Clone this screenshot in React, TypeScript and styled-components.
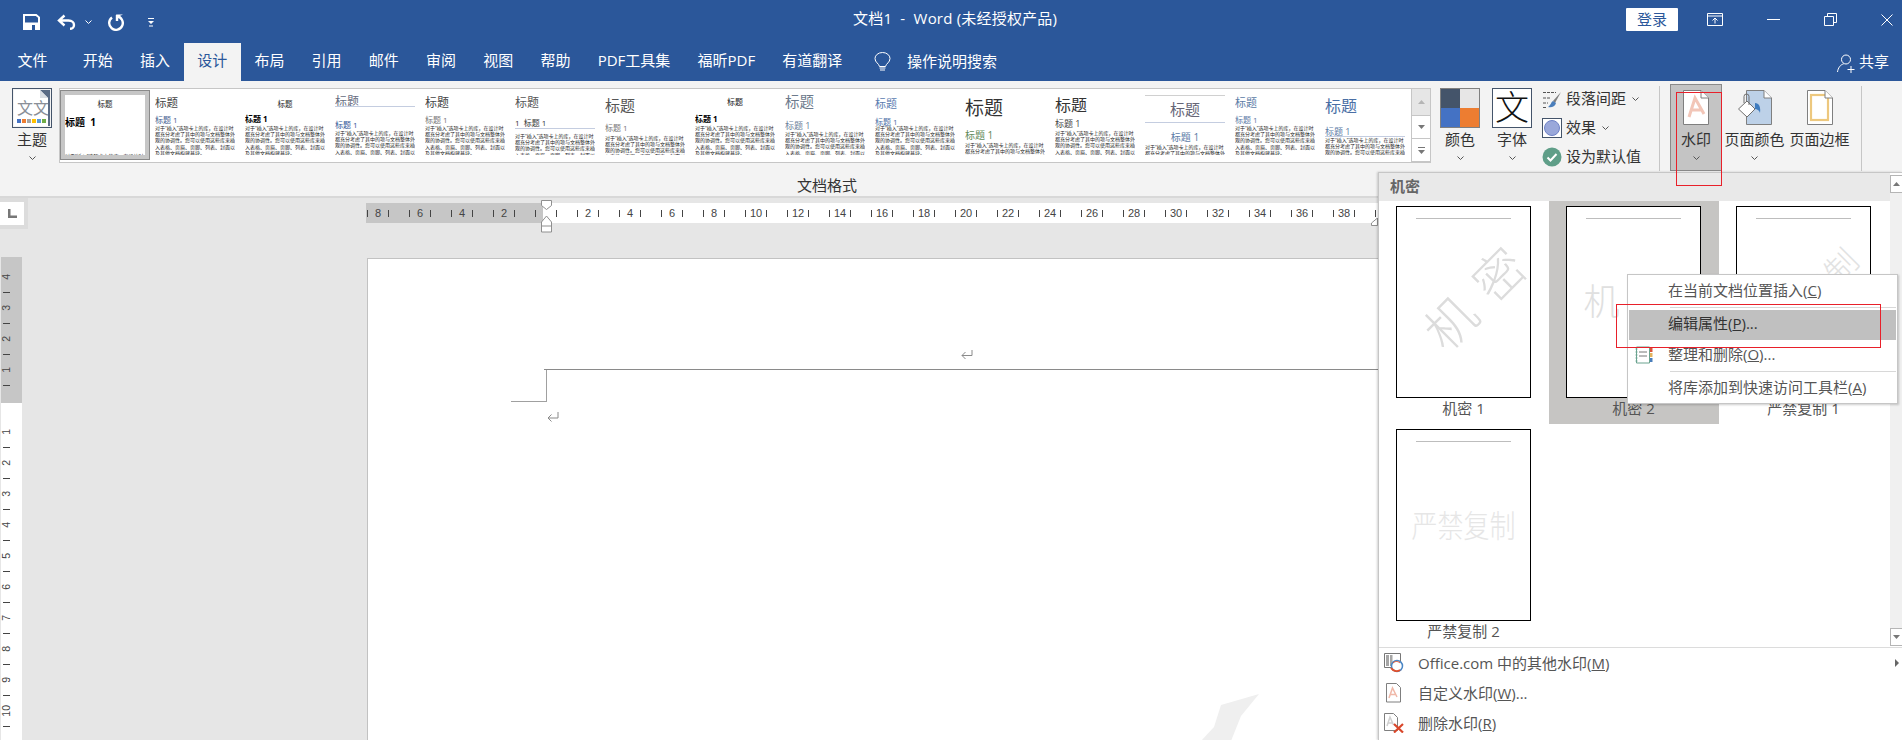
import React from 'react';
import styled, { createGlobalStyle } from 'styled-components';

const FONT = `"Open Sans", "Noto Sans CJK SC", sans-serif`;

const GlobalStyle = createGlobalStyle`
  html, body {
    margin: 0;
    padding: 0;
    overflow: hidden;
    font-family: ${FONT};
  }
  * { box-sizing: border-box; }
`;

const Shell = styled.div`
  position: relative;
  width: 1902px;
  height: 740px;
  overflow: hidden;
  display: flex;
  flex-direction: column;
  background: #e6e6e6;
`;

/* title bar */
const TitleBar = styled.div`
  height: 43px;
  display: flex;
  align-items: center;
  background: #2b579a;
  color: #fff;
  font-size: 15px;
`;
const QuickAccess = styled.div`
  width: 853px;
  padding-left: 23px;
  padding-top: 1px;
  display: flex;
  align-items: center;
`;
const QuickIcon = styled.svg<{ $ml?: number }>`
  display: block;
  margin-left: ${(p) => p.$ml ?? 0}px;
`;
const DocTitle = styled.div`
  white-space: pre;
  line-height: 20px;
  letter-spacing: 0.2px;
  margin-top: -8px;
`;
const WindowControls = styled.div`
  margin-left: auto;
  padding-right: 9px;
  display: flex;
  align-items: center;
  gap: 44px;
  margin-top: -4px;
`;
const LoginButton = styled.button`
  width: 52px;
  height: 23px;
  margin-right: -15px;
  padding: 0 0 2px;
  border: 0;
  border-radius: 1px;
  background: #fff;
  color: #2b579a;
  font: 15px/20px ${FONT};
`;

/* tabs */
const TabBar = styled.div`
  height: 38px;
  padding-left: 4px;
  display: flex;
  align-items: stretch;
  background: #2b579a;
  color: #fff;
  font-size: 15px;
`;
const Tab = styled.div<{ $active?: boolean; $gapRight?: number }>`
  padding: 0 13.6px;
  line-height: 34px;
  white-space: nowrap;
  margin-right: ${(p) => p.$gapRight ?? 0}px;
  background: ${(p) => (p.$active ? '#f3f3f3' : 'transparent')};
  color: ${(p) => (p.$active ? '#2b579a' : '#fff')};
`;
const SearchHint = styled.div`
  margin-left: 18px;
  display: flex;
  align-items: center;
  gap: 16px;
  height: 38px;
`;
const ShareBox = styled.div`
  margin-left: auto;
  padding-right: 13px;
  height: 40px;
  display: flex;
  align-items: center;
  gap: 4px;
`;
const RaisedText = styled.span<{ $lift: number }>`
  margin-top: -${(p) => p.$lift}px;
  white-space: nowrap;
`;

/* ribbon */
const Ribbon = styled.div`
  height: 117px;
  padding-top: 3px;
  display: flex;
  background: #f3f3f3;
  border-bottom: 2px solid #d8d8d8;
  color: #333;
  font-size: 15px;
`;
const FormatGroup = styled.div`
  width: 1659px;
  padding-left: 6px;
  display: flex;
  flex-direction: column;
`;
const FormatRow = styled.div`
  height: 92px;
  display: flex;
  align-items: flex-start;
`;
const GroupCaption = styled.div`
  height: 20px;
  line-height: 18px;
  text-align: center;
  padding-right: 11px;
`;
const RibbonSeparator = styled.div`
  width: 1px;
  height: 85px;
  margin-top: 2px;
  background: #c6c6c6;
`;
const PageGroup = styled.div`
  display: flex;
  padding-left: 10px;
  width: 201px;
`;
const RibbonButton = styled.div<{ $width: number; $active?: boolean }>`
  width: ${(p) => p.$width}px;
  height: 87px;
  display: flex;
  flex-direction: column;
  align-items: center;
  background: ${(p) => (p.$active ? '#c4c4c4' : 'transparent')};
  box-shadow: ${(p) => (p.$active ? 'inset 0 0 0 1px #8a8a8a' : 'none')};
`;
const ButtonArt = styled.div`
  height: 47px;
  display: flex;
  align-items: center;
  justify-content: center;
`;
const ButtonLabel = styled.div`
  height: 19px;
  line-height: 17px;
  white-space: nowrap;
`;
const ButtonChevron = styled.svg`
  display: block;
  margin-top: 6px;
`;
const ThemeTile = styled.div`
  width: 40px;
  height: 40px;
  border: 1px solid #44546a;
  padding: 1px;
  background: #f3f3f3;
`;
const SwatchGrid = styled.div`
  width: 40px;
  height: 40px;
  display: grid;
  grid-template-columns: 1fr 1fr;
  border: 1px solid #808080;
`;
const Swatch = styled.div<{ $color: string }>`
  background: ${(p) => p.$color};
`;
const FontTile = styled.div`
  width: 40px;
  height: 40px;
  border: 1px solid #44546a;
  background: #fff;
  color: #111;
  font-size: 34px;
  font-weight: 300;
  line-height: 36px;
  text-align: center;
`;

/* style gallery */
const Gallery = styled.div`
  width: 1372px;
  height: 75px;
  margin: 4px 3px 0 1px;
  display: flex;
  border: 1px solid #c6c6c6;
  background: #fff;
`;
const TileRow = styled.div`
  width: 1351px;
  display: flex;
  padding: 1px 0 0 0;
`;
const Tile = styled.div<{ $selected?: boolean }>`
  width: 90px;
  height: 70px;
  padding: 5px;
  flex: none;
  background: ${(p) => (p.$selected ? '#c6c6c6' : '#fff')};
  box-shadow: ${(p) => (p.$selected ? 'inset 0 0 0 1px #8a8a8a' : 'none')};
`;
const TileSheet = styled.div`
  position: relative;
  width: 80px;
  height: 60px;
  overflow: hidden;
  background: #fff;
`;
const TileTitle = styled.div<{ $mt: number; $size: number; $color: string; $center?: boolean; $bold?: boolean; $rule?: number }>`
  position: relative;
  margin-top: ${(p) => p.$mt}px;
  height: ${(p) => p.$size}px;
  font-size: ${(p) => p.$size}px;
  line-height: ${(p) => p.$size}px;
  font-weight: ${(p) => (p.$bold ? 700 : 400)};
  color: ${(p) => p.$color};
  text-align: ${(p) => (p.$center ? 'center' : 'left')};
  white-space: pre;
  &::after {
    content: '';
    display: ${(p) => (p.$rule ? 'block' : 'none')};
    position: absolute;
    left: 0;
    right: 0;
    top: ${(p) => p.$rule ?? 0}px;
    height: 1px;
    background: #c4cde0;
  }
`;
const TileBody = styled.div<{ $mt: number }>`
  margin-top: ${(p) => p.$mt}px;
  font-size: 5px;
  line-height: 6.2px;
  color: #222;
`;
const SheetTopRule = styled.div`
  position: absolute;
  left: 0;
  right: 0;
  top: 0;
  height: 1px;
  background: #d0d0d0;
`;
const GalleryScroll = styled.div`
  width: 19px;
  display: flex;
  flex-direction: column;
  border-left: 1px solid #c6c6c6;
`;
const ScrollStep = styled.div<{ $height: number; $muted?: boolean }>`
  height: ${(p) => p.$height}px;
  display: flex;
  align-items: center;
  justify-content: center;
  background: ${(p) => (p.$muted ? '#e6e6e6' : '#fff')};
  border-bottom: 1px solid #c6c6c6;
`;

/* small ribbon rows */
const SmallStack = styled.div`
  margin-left: 4px;
  display: flex;
  flex-direction: column;
`;
const SmallRow = styled.div`
  height: 29px;
  display: flex;
  align-items: center;
  gap: 4px;
  white-space: nowrap;
`;
const SmallChevron = styled.svg`
  margin-left: 2px;
`;
const EffectTile = styled.div`
  width: 20px;
  height: 20px;
  border: 1px solid #44546a;
  background: #fff;
  display: flex;
  align-items: center;
  justify-content: center;
`;
const EffectDot = styled.div`
  width: 16px;
  height: 16px;
  border-radius: 50%;
  background: #9aa8da;
  border: 1px solid #6f82c6;
`;

/* workspace */
const Workspace = styled.div`
  flex: 1;
  min-height: 0;
  display: flex;
  overflow: hidden;
  background: #e6e6e6;
`;
const LeftColumn = styled.div`
  width: 28px;
  flex: none;
  display: flex;
  flex-direction: column;
`;
const RulerCorner = styled.div`
  height: 31px;
  padding: 4px 4px 4px 0;
  background: #dcdcdc;
`;
const CornerBox = styled.div`
  height: 23px;
  background: #fff;
  display: flex;
  align-items: center;
  justify-content: center;
`;
const VerticalRuler = styled.div`
  width: 21px;
  margin: 28px 0 0 1px;
  flex: 1;
  padding-top: 4.5px;
  background: linear-gradient(to bottom, #c6c6c6 146px, #fff 146px);
`;
const VerticalSlot = styled.div`
  height: 31px;
  display: flex;
  align-items: center;
  justify-content: center;
  font: 10.5px/1 "Liberation Sans", sans-serif;
  color: #444;
  writing-mode: vertical-rl;
  background: linear-gradient(#444, #444) center bottom / 7px 1px no-repeat;
  & > span { transform: rotate(180deg); }
`;
const MainColumn = styled.div`
  flex: 1;
  min-width: 0;
  padding: 5px 0 0 338px;
  display: flex;
  flex-direction: column;
`;
const RulerWrap = styled.div`
  position: relative;
  width: 1014px;
  height: 20px;
  flex: none;
`;
const RulerTrack = styled.div`
  height: 20px;
  overflow: hidden;
  display: flex;
  padding-left: 0;
  background: linear-gradient(to right, #c6c6c6 177px, #fff 177px);
`;
const RulerSlot = styled.div<{ $first?: boolean }>`
  width: 42px;
  flex: none;
  margin-left: ${(p) => (p.$first ? -9 : 0)}px;
  text-align: center;
  font: 11px/20px "Liberation Sans", sans-serif;
  color: #444;
  background:
    linear-gradient(#444, #444) 10px center / 1px 7px no-repeat,
    linear-gradient(#444, #444) 31px center / 1px 7px no-repeat;
`;
const IndentMarker = styled.svg<{ $left: number; $top: number }>`
  position: absolute;
  left: ${(p) => p.$left}px;
  top: ${(p) => p.$top}px;
`;
const PageSheet = styled.div`
  position: relative;
  flex: 1;
  margin: 35px 0 0 1px;
  background: #fff;
  border: 1px solid #c2c2c2;
  border-right: 0;
  border-bottom: 0;
`;
const HeaderBand = styled.div`
  height: 111px;
  margin-left: 176px;
  padding: 0 0 10px 417px;
  display: flex;
  align-items: flex-end;
  border-bottom: 1px solid #8a8a8a;
`;
const CropMark = styled.div`
  width: 36px;
  height: 32px;
  margin-left: 143px;
  border-right: 1px solid #a0a0a0;
  border-bottom: 1px solid #a0a0a0;
`;
const ParagraphMark = styled.svg`
  display: block;
  margin: 10px 0 0 179px;
`;
const WatermarkPeek = styled.svg`
  position: absolute;
  left: 833px;
  top: 432px;
`;

/* watermark dropdown */
const WatermarkPanel = styled.div`
  position: absolute;
  left: 1378px;
  top: 172px;
  width: 524px;
  height: 568px;
  display: flex;
  flex-direction: column;
  background: #fff;
  border-left: 1px solid #c6c6c6;
  border-top: 1px solid #c6c6c6;
  box-shadow: -1px 0 2px rgba(0, 0, 0, 0.18);
  color: #555;
  font-size: 15px;
`;
const PanelBody = styled.div`
  height: 473px;
  display: flex;
  flex: none;
`;
const PanelGallery = styled.div`
  width: 511px;
`;
const PanelHeader = styled.div`
  height: 28px;
  padding-left: 11px;
  line-height: 26px;
  background: #e9e9e9;
  font-weight: 700;
  color: #666;
`;
const CardGrid = styled.div`
  display: grid;
  grid-template-columns: repeat(3, 170px);
  grid-auto-rows: 223px;
`;
const Card = styled.div<{ $selected?: boolean }>`
  padding: 5px 0 0 17px;
  background: ${(p) => (p.$selected ? '#c6c5c3' : 'transparent')};
`;
const Thumb = styled.div`
  width: 135px;
  height: 192px;
  padding-top: 11px;
  display: flex;
  flex-direction: column;
  overflow: hidden;
  background: #fff;
  border: 1.5px solid #000;
`;
const ThumbRule = styled.div`
  height: 1px;
  margin: 0 19px;
  flex: none;
  background: #bdbdbd;
`;
const ThumbStage = styled.div`
  flex: 1;
  margin-bottom: 12px;
  display: flex;
  align-items: center;
  justify-content: center;
`;
const ThumbMark = styled.div<{ $size: number; $angle: number; $spacing: number; $color: string; $stretch?: number; $dx?: number; $dy?: number }>`
  font-size: ${(p) => p.$size}px;
  font-weight: 300;
  letter-spacing: ${(p) => p.$spacing}px;
  margin-right: -${(p) => p.$spacing}px;
  line-height: 1;
  white-space: nowrap;
  color: ${(p) => p.$color};
  transform: translate(${(p) => p.$dx ?? 0}px, ${(p) => p.$dy ?? 0}px) rotate(${(p) => p.$angle}deg) scaleY(${(p) => p.$stretch ?? 1});
`;
const CardLabel = styled.div`
  width: 135px;
  height: 26px;
  line-height: 21px;
  text-align: center;
`;
const PanelScroll = styled.div`
  width: 12px;
  margin-top: 2px;
  display: flex;
  flex-direction: column;
  background: #f0f0f0;
`;
const PanelStep = styled.div<{ $bottom?: boolean }>`
  height: 18px;
  margin-top: ${(p) => (p.$bottom ? 'auto' : 0)};
  display: flex;
  align-items: center;
  justify-content: center;
  background: #fff;
  border: 1px solid #b5b5b5;
  border-right: 0;
`;
const PanelFooter = styled.div`
  margin-top: 1px;
  border-top: 1px solid #dcdcdc;
`;
const FooterRow = styled.div`
  height: 30px;
  display: flex;
  align-items: center;
`;
const FooterArt = styled.div`
  width: 39px;
  padding-left: 5px;
  flex: none;
  display: flex;
`;
const SubmenuArrow = styled.div`
  margin-left: auto;
  margin-right: 3px;
  width: 0;
  height: 0;
  border-left: 4px solid #666;
  border-top: 4px solid transparent;
  border-bottom: 4px solid transparent;
`;

/* context menu */
const ContextMenu = styled.div`
  position: absolute;
  left: 1627px;
  top: 274px;
  width: 271px;
  height: 130px;
  padding: 2px 1px;
  background: #fff;
  border: 1px solid #c6c6c6;
  box-shadow: 1px 1px 2px rgba(0, 0, 0, 0.2);
  color: #555;
  font-size: 15px;
`;
const MenuItem = styled.div<{ $active?: boolean; $mb?: number }>`
  position: relative;
  height: 30px;
  padding-left: 39px;
  line-height: 27px;
  white-space: nowrap;
  margin-bottom: ${(p) => p.$mb ?? 0}px;
  background: ${(p) => (p.$active ? '#c0c0c0' : 'transparent')};
  color: ${(p) => (p.$active ? '#333' : '#555')};
`;
const MenuGlyph = styled.svg`
  position: absolute;
  left: 6px;
  top: 5px;
`;
const MenuRule = styled.div`
  height: 1px;
  margin: 0 0 2px 41px;
  background: #d8d8d8;
`;

const RedBox = styled.div<{ $x: number; $y: number; $w: number; $h: number }>`
  position: absolute;
  left: ${(p) => p.$x}px;
  top: ${(p) => p.$y}px;
  width: ${(p) => p.$w}px;
  height: ${(p) => p.$h}px;
  border: 1px solid #e8202a;
  pointer-events: none;
`;

const BODY_TEXT =
  '对于“插入”选项卡上的库，在设计时都充分考虑了其中的项与文档整体外观的协调性。您可以使用这些库来插入表格、页眉、页脚、列表、封面以及其他文档构建基块。';

type Line = { text?: string; y: number; size: number; color: string; center?: boolean; bold?: boolean; rule?: number };
type StyleTile = { title: Line; head: Line; bodyTop: number; topRule?: boolean };

const line = (y: number, size: number, color: string, extra: Partial<Line> = {}): Line => ({ y, size, color, ...extra });

const STYLE_TILES: StyleTile[] = [
  { title: line(10, 7.5, '#222', { center: true }), head: line(27, 10, '#000', { bold: true, text: '标题  1' }), bodyTop: 58 },
  { title: line(8, 11.5, '#444'), head: line(25, 8, '#44618f'), bodyTop: 30 },
  { title: line(10, 7.5, '#222', { center: true }), head: line(24, 8, '#000', { bold: true }), bodyTop: 30 },
  { title: line(7, 12, '#666c80', { rule: 10 }), head: line(30, 8, '#2f5496'), bodyTop: 35 },
  { title: line(8, 12, '#444'), head: line(25, 8, '#777'), bodyTop: 30 },
  { title: line(8, 12, '#555'), head: line(28, 8, '#333', { text: '1  标题 1', rule: 9 }), bodyTop: 38 },
  { title: line(10, 15, '#555'), head: line(33, 8, '#777'), bodyTop: 39.5 },
  { title: line(7, 8, '#111', { center: true }), head: line(24, 8, '#000', { bold: true }), bodyTop: 30 },
  { title: line(7, 14.5, '#6d7a8c'), head: line(30, 9, '#6b7f9a'), bodyTop: 36 },
  { title: line(8, 11, '#5a7bb0'), head: line(27, 8, '#4a6fa5'), bodyTop: 30 },
  { title: line(13, 19, '#333'), head: line(40, 10, '#5f8a5a'), bodyTop: 47 },
  { title: line(10, 16, '#333'), head: line(28, 9, '#444'), bodyTop: 35 },
  { title: line(14, 15, '#667', { center: true, rule: 20 }), head: line(42, 10, '#5b7ba6', { center: true }), bodyTop: 49, topRule: true },
  { title: line(7, 11, '#5b7ba6'), head: line(25, 8, '#5b7ba6'), bodyTop: 30 },
  { title: line(11, 16, '#4a6fa5'), head: line(36, 9, '#5b7ba6', { rule: 9 }), bodyTop: 42 },
];

const TAB_NAMES = ['开始', '插入', '设计', '布局', '引用', '邮件', '审阅', '视图', '帮助', 'PDF工具集', '福昕PDF', '有道翻译'];
const RULER_STOPS = [8, 6, 4, 2, 0, ...Array.from({ length: 20 }, (_, i) => (i + 1) * 2)];
const SIDE_STOPS = ['4', '3', '2', '1', '', '1', '2', '3', '4', '5', '6', '7', '8', '9', '10'];

const Chevron = ({ color = '#555' }: { color?: string }) => (
  <path d="M.5.5 3.5 3.5 6.5.5" fill="none" stroke={color} strokeWidth="1" />
);

const StyleTileView = ({ tile, selected }: { tile: StyleTile; selected?: boolean }) => {
  const { title, head, bodyTop } = tile;
  const titleEnd = title.y + title.size / 2;
  const headEnd = head.y + head.size / 2;
  return (
    <Tile $selected={selected}>
      <TileSheet>
        {tile.topRule && <SheetTopRule />}
        <TileTitle $mt={title.y - title.size / 2} $size={title.size} $color={title.color} $center={title.center} $bold={title.bold} $rule={title.rule}>
          标题
        </TileTitle>
        <TileTitle $mt={head.y - head.size / 2 - titleEnd} $size={head.size} $color={head.color} $center={head.center} $bold={head.bold} $rule={head.rule}>
          {head.text ?? '标题 1'}
        </TileTitle>
        <TileBody $mt={bodyTop - headEnd}>{BODY_TEXT}</TileBody>
      </TileSheet>
    </Tile>
  );
};

const PageOutline = ({ children }: { children?: React.ReactNode }) => (
  <svg width="26" height="35" viewBox="0 0 26 35">
    <path d="M.5.5H18L25.5 8V34.5H.5z" fill="#fff" stroke="#7f7f7f" />
    {children}
    <path d="M18 .5V8h7.5" fill="#fff" stroke="#7f7f7f" />
  </svg>
);

const ThemeArt = () => (
  <svg width="36" height="36" viewBox="0 0 36 36">
    <rect width="36" height="36" fill="#fff" />
    <text x="3" y="24" fontSize="16" fill="#8a8f98" fontFamily="Noto Sans CJK SC">文文</text>
    <path d="M34 8V36h2V0H26z" fill="#5a6b85" />
    <path d="M26 0v8h8z" fill="#d9dde3" />
    {['#4472c4', '#ed7d31', '#a5a5a5', '#ffc000', '#5b9bd5', '#70ad47'].map((c, i) => (
      <rect key={c} x={3 + i * 5} y="29" width="4" height="4" fill={c} />
    ))}
  </svg>
);

const App = () => (
  <Shell>
    <GlobalStyle />
    <TitleBar>
      <QuickAccess>
        <QuickIcon width="17" height="16" viewBox="0 0 17 16">
          <path fillRule="evenodd" d="M0 0h13.5L17 3v13H0zM2 2v6.5h13V3.8L12.8 2z" fill="#fff" />
          <rect x="9" y="11" width="3" height="5" fill="#2b579a" />
        </QuickIcon>
        <QuickIcon $ml={17} width="19" height="16" viewBox="0 0 19 16">
          <path d="M7.5 1.5 2 6.5l5.5 5M2 6.5h9.5C15 6.5 17 8.5 17 11c0 2.500-2 3.800-4 3.800" fill="none" stroke="#fff" strokeWidth="2.400" />
        </QuickIcon>
        <QuickIcon $ml={9} width="7" height="4" viewBox="0 0 7 4"><Chevron color="#fff" /></QuickIcon>
        <QuickIcon $ml={15} width="17" height="17" viewBox="0 0 17 17">
          <path d="M5 3.500a6.800 6.800 0 1 0 5-1.200V7" fill="none" stroke="#fff" strokeWidth="2.400" />
          <path d="M9 .5h7L10.500 3z" fill="#fff" />
        </QuickIcon>
        <QuickIcon $ml={24} width="6" height="9" viewBox="0 0 6 9">
          <path d="M0 0h6v1H0zM0 3h6L3 6zM1 7.500h4v1H1z" fill="#fff" />
        </QuickIcon>
      </QuickAccess>
      <DocTitle>文档1  -  Word (未经授权产品)</DocTitle>
      <WindowControls>
        <LoginButton>登录</LoginButton>
        <svg width="16" height="13" viewBox="0 0 16 13">
          <path d="M.5.5h15v12H.5zM.5 3h15" fill="none" stroke="#fff" />
          <path d="M8 10.500V5.500M5.500 7.500 8 5l2.500 2.500" fill="none" stroke="#fff" />
        </svg>
        <svg width="13" height="13" viewBox="0 0 13 13"><path d="M0 6.500h13" stroke="#fff" /></svg>
        <svg width="13" height="13" viewBox="0 0 13 13">
          <path d="M.5 3.500h9v9h-9zM3.500 3.500v-3h9v9h-3" fill="none" stroke="#fff" />
        </svg>
        <svg width="12" height="12" viewBox="0 0 12 12"><path d="M.5.500l11 11M11.500.5l-11 11" stroke="#fff" /></svg>
      </WindowControls>
    </TitleBar>

    <TabBar>
      <Tab $gapRight={8}>文件</Tab>
      {TAB_NAMES.map((name) => (
        <Tab key={name} $active={name === '设计'}>{name}</Tab>
      ))}
      <SearchHint>
        <svg width="17" height="20" viewBox="0 0 17 20">
          <path d="M5.500 14.500C5 11.500 1 10.500 1 6.500a7.500 6 0 0 1 15 0c0 4-4 5-4.500 8z" fill="none" stroke="#fff" />
          <path d="M5.500 16h6M6 18h5" stroke="#fff" strokeWidth="1.200" />
        </svg>
        <RaisedText $lift={4}>操作说明搜索</RaisedText>
      </SearchHint>
      <ShareBox>
        <svg width="18" height="19" viewBox="0 0 18 19">
          <circle cx="9" cy="5.500" r="4.500" fill="none" stroke="#fff" />
          <path d="M.5 18c.5-4 3-7.500 6-8M14 12v7M10.500 15.500h7" fill="none" stroke="#fff" />
        </svg>
        <RaisedText $lift={6}>共享</RaisedText>
      </ShareBox>
    </TabBar>

    <Ribbon>
      <FormatGroup>
        <FormatRow>
          <RibbonButton $width={52}>
            <ButtonArt>
              <ThemeTile><ThemeArt /></ThemeTile>
            </ButtonArt>
            <ButtonLabel>主题</ButtonLabel>
            <ButtonChevron width="7" height="4" viewBox="0 0 7 4"><Chevron /></ButtonChevron>
          </RibbonButton>
          <Gallery>
            <TileRow>
              {STYLE_TILES.map((tile, i) => (
                <StyleTileView key={i} tile={tile} selected={i === 0} />
              ))}
            </TileRow>
            <GalleryScroll>
              <ScrollStep $height={27} $muted>
                <svg width="7" height="4" viewBox="0 0 7 4"><path d="M3.500 0 7 4H0z" fill="#b5b5b5" /></svg>
              </ScrollStep>
              <ScrollStep $height={23}>
                <svg width="7" height="4" viewBox="0 0 7 4"><path d="M0 0h7L3.500 4z" fill="#777" /></svg>
              </ScrollStep>
              <ScrollStep $height={23}>
                <svg width="7" height="7" viewBox="0 0 7 7"><path d="M0 0h7v1H0zM0 3h7L3.500 7z" fill="#777" /></svg>
              </ScrollStep>
            </GalleryScroll>
          </Gallery>
          <RibbonButton $width={52}>
            <ButtonArt>
              <SwatchGrid>
                {['#44546a', '#e7e6e6', '#4472c4', '#ed7d31'].map((c) => <Swatch key={c} $color={c} />)}
              </SwatchGrid>
            </ButtonArt>
            <ButtonLabel>颜色</ButtonLabel>
            <ButtonChevron width="7" height="4" viewBox="0 0 7 4"><Chevron /></ButtonChevron>
          </RibbonButton>
          <RibbonButton $width={52}>
            <ButtonArt><FontTile>文</FontTile></ButtonArt>
            <ButtonLabel>字体</ButtonLabel>
            <ButtonChevron width="7" height="4" viewBox="0 0 7 4"><Chevron /></ButtonChevron>
          </RibbonButton>
          <SmallStack>
            <SmallRow>
              <svg width="20" height="20" viewBox="0 0 20 20">
                <path d="M1 3.500h13M1 9h8M1 14h5M1 18.500h4" stroke="#555" strokeDasharray="3 1" />
                <path d="M19 3 11 12l2 2z" fill="#7f7f7f" />
                <path d="M11 12c-2 1-2 4-5 6 3 1 7 0 8-4z" fill="#4a7ebb" />
              </svg>
              <RaisedText $lift={2}>段落间距</RaisedText>
              <SmallChevron width="7" height="4" viewBox="0 0 7 4"><Chevron /></SmallChevron>
            </SmallRow>
            <SmallRow>
              <EffectTile><EffectDot /></EffectTile>
              <RaisedText $lift={2}>效果</RaisedText>
              <SmallChevron width="7" height="4" viewBox="0 0 7 4"><Chevron /></SmallChevron>
            </SmallRow>
            <SmallRow>
              <svg width="20" height="20" viewBox="0 0 20 20">
                <circle cx="10" cy="10" r="9.500" fill="#5f9e88" />
                <path d="m5.500 10.500 3 3 6-6.500" fill="none" stroke="#fff" strokeWidth="2" />
              </svg>
              <RaisedText $lift={2}>设为默认值</RaisedText>
            </SmallRow>
          </SmallStack>
        </FormatRow>
        <GroupCaption>文档格式</GroupCaption>
      </FormatGroup>
      <RibbonSeparator />
      <PageGroup>
        <RibbonButton $width={52} $active>
          <ButtonArt>
            <PageOutline>
              <path d="M6 27 12 8l9 16M8 20h11" fill="none" stroke="#f2c6b8" strokeWidth="3" />
            </PageOutline>
          </ButtonArt>
          <ButtonLabel>水印</ButtonLabel>
          <ButtonChevron width="7" height="4" viewBox="0 0 7 4"><Chevron /></ButtonChevron>
        </RibbonButton>
        <RibbonButton $width={65}>
          <ButtonArt>
            <svg width="34" height="35" viewBox="0 0 34 35">
              <path d="M8.500.5H26L33.500 8v26.500h-25z" fill="#bdd1e8" stroke="#7f7f7f" />
              <path d="M26 .5V8h7.500" fill="#fff" stroke="#7f7f7f" />
              <path d="M.5 19 9 11l8 8-8 8z" fill="#fff" stroke="#6f6f6f" />
              <path d="M6 13V6.500a2.500 2.500 0 0 1 5 0V15" fill="none" stroke="#6f6f6f" />
              <path d="M17 13c4 0 6 4 5 10-1-3-3-4-5-4z" fill="#3f7cbf" />
            </svg>
          </ButtonArt>
          <ButtonLabel>页面颜色</ButtonLabel>
          <ButtonChevron width="7" height="4" viewBox="0 0 7 4"><Chevron /></ButtonChevron>
        </RibbonButton>
        <RibbonButton $width={65}>
          <ButtonArt>
            <PageOutline>
              <rect x="4" y="5" width="17" height="25" fill="none" stroke="#edc87e" strokeWidth="2.200" />
            </PageOutline>
          </ButtonArt>
          <ButtonLabel>页面边框</ButtonLabel>
        </RibbonButton>
      </PageGroup>
      <RibbonSeparator />
    </Ribbon>

    <Workspace>
      <LeftColumn>
        <RulerCorner>
          <CornerBox>
            <svg width="9" height="9" viewBox="0 0 9 9"><path d="M0 0h2.500v6.500H9V9H0z" fill="#777" /></svg>
          </CornerBox>
        </RulerCorner>
        <VerticalRuler>
          {SIDE_STOPS.map((n, i) => (
            <VerticalSlot key={i}><span>{n}</span></VerticalSlot>
          ))}
        </VerticalRuler>
      </LeftColumn>
      <MainColumn>
        <RulerWrap>
          <RulerTrack>
            {RULER_STOPS.map((n, i) => (
              <RulerSlot key={i} $first={i === 0}>{n === 0 ? '' : n}</RulerSlot>
            ))}
          </RulerTrack>
          <IndentMarker $left={175} $top={-3} width="11" height="33" viewBox="0 0 11 33">
            <path d="M.5.5h10v5L5.500 9.500.5 5.500zM5.500 16l5 6v10h-10V22zM.5 26h10" fill="#fff" stroke="#8f8f8f" />
          </IndentMarker>
          <IndentMarker $left={1005} $top={15} width="7" height="8" viewBox="0 0 7 8">
            <path d="M6.500 0v7.500h-6V5z" fill="#fff" stroke="#8f8f8f" />
          </IndentMarker>
        </RulerWrap>
        <PageSheet>
          <HeaderBand>
            <svg width="12" height="9" viewBox="0 0 12 9"><path d="M11 0v5.500H1M4.500 2 1 5.500 4.500 9" fill="none" stroke="#8a8a8a" /></svg>
          </HeaderBand>
          <CropMark />
          <ParagraphMark width="12" height="10" viewBox="0 0 12 10">
            <path d="M11 0v6H1M4.500 2.500 1 6l3.500 3.500" fill="none" stroke="#8a8a8a" />
          </ParagraphMark>
          <WatermarkPeek width="70" height="60" viewBox="0 0 70 60">
            <path d="M20 14 58 3 40 25 30 50H0l13-14z" fill="#efefef" />
          </WatermarkPeek>
        </PageSheet>
      </MainColumn>
    </Workspace>

    <WatermarkPanel>
      <PanelBody>
        <PanelGallery>
          <PanelHeader>机密</PanelHeader>
          <CardGrid>
            <Card>
              <Thumb>
                <ThumbRule />
                <ThumbStage>
                  <ThumbMark $size={50} $angle={-45} $spacing={18} $color="#dcdcdc" $dx={8} $dy={-10}>机密</ThumbMark>
                </ThumbStage>
              </Thumb>
              <CardLabel>机密 1</CardLabel>
            </Card>
            <Card $selected>
              <Thumb>
                <ThumbRule />
                <ThumbStage><ThumbMark $size={36} $angle={0} $spacing={28} $color="#e0e0e0">机密</ThumbMark></ThumbStage>
              </Thumb>
              <CardLabel>机密 2</CardLabel>
            </Card>
            <Card>
              <Thumb>
                <ThumbRule />
                <ThumbStage><ThumbMark $size={32} $angle={-45} $spacing={3} $color="#e2e2e2">严禁复制</ThumbMark></ThumbStage>
              </Thumb>
              <CardLabel>严禁复制 1</CardLabel>
            </Card>
            <Card>
              <Thumb>
                <ThumbRule />
                <ThumbStage><ThumbMark $size={26} $angle={0} $spacing={0} $color="#e6e6e6" $stretch={1.2}>严禁复制</ThumbMark></ThumbStage>
              </Thumb>
              <CardLabel>严禁复制 2</CardLabel>
            </Card>
          </CardGrid>
        </PanelGallery>
        <PanelScroll>
          <PanelStep>
            <svg width="7" height="4" viewBox="0 0 7 4"><path d="M3.500 0 7 4H0z" fill="#777" /></svg>
          </PanelStep>
          <PanelStep $bottom>
            <svg width="7" height="4" viewBox="0 0 7 4"><path d="M0 0h7L3.500 4z" fill="#777" /></svg>
          </PanelStep>
        </PanelScroll>
      </PanelBody>
      <PanelFooter>
        <FooterRow>
          <FooterArt>
            <svg width="20" height="20" viewBox="0 0 20 20">
              <path d="M.5.5h16v14H.5z" fill="#fff" stroke="#777" />
              <path d="M2 2h3v11H2zM6 2h2.500v11H6z" fill="#a6a6a6" />
              <circle cx="13" cy="13" r="5.500" fill="#fff" stroke="#4a86c5" strokeWidth="1.500" />
              <path d="M7 15c2 3 6 4 9 2" fill="none" stroke="#e2502a" strokeWidth="1.800" />
              <path d="M9 10c2-2 5-2 7 0" fill="none" stroke="#e2502a" strokeWidth="1" />
            </svg>
          </FooterArt>
          <RaisedText $lift={2}>Office.com 中的其他水印(<u>M</u>)</RaisedText>
          <SubmenuArrow />
        </FooterRow>
        <FooterRow>
          <FooterArt>
            <svg width="20" height="20" viewBox="0 0 20 20">
              <path d="M2.500.5h10l4 4v14.500h-14z" fill="#fff" stroke="#7f7f7f" />
              <path d="M5 15 8.500 5l4.500 9M6.500 11.500h5.500" fill="none" stroke="#f0b8a8" strokeWidth="1.500" />
            </svg>
          </FooterArt>
          <RaisedText $lift={2}>自定义水印(<u>W</u>)...</RaisedText>
        </FooterRow>
        <FooterRow>
          <FooterArt>
            <svg width="20" height="20" viewBox="0 0 20 20">
              <path d="M.5.500h9l4 4V17.500H.5z" fill="#fff" stroke="#7f7f7f" />
              <path d="M3 13 6 4l3.500 8M4 10h4.500" fill="none" stroke="#d0d0d0" strokeWidth="1.500" />
              <path d="m10 11 9 8.500M19 11l-9 8.500" stroke="#d9472b" strokeWidth="2.200" />
            </svg>
          </FooterArt>
          <RaisedText $lift={2}>删除水印(<u>R</u>)</RaisedText>
        </FooterRow>
      </PanelFooter>
    </WatermarkPanel>

    <ContextMenu>
      <MenuItem>在当前文档位置插入(<u>C</u>)</MenuItem>
      <MenuRule />
      <MenuItem $active $mb={1}>编辑属性(<u>P</u>)...</MenuItem>
      <MenuItem>
        <MenuGlyph width="18" height="18" viewBox="0 0 18 18">
          <path d="M1.500 1h13v16h-13z" fill="#fff" stroke="#6aa38f" />
          <path d="M4 6h8M4 10h8" stroke="#777" />
          <path d="M.5 3h2M.5 6h2M.5 9h2M.5 12h2M.5 15h2" stroke="#6aa38f" />
          <path d="M15 2h2.500v4H15z" fill="#d9563a" />
          <path d="M15 7h2.500v4H15z" fill="#e3b35e" />
          <path d="M15 12h2.500v4H15z" fill="#4a7ebb" />
        </MenuGlyph>
        整理和删除(<u>O</u>)...
      </MenuItem>
      <MenuRule />
      <MenuItem>将库添加到快速访问工具栏(<u>A</u>)</MenuItem>
    </ContextMenu>

    <RedBox $x={1676} $y={92} $w={46} $h={94} />
    <RedBox $x={1616} $y={304} $w={265} $h={44} />
  </Shell>
);

export default App;
